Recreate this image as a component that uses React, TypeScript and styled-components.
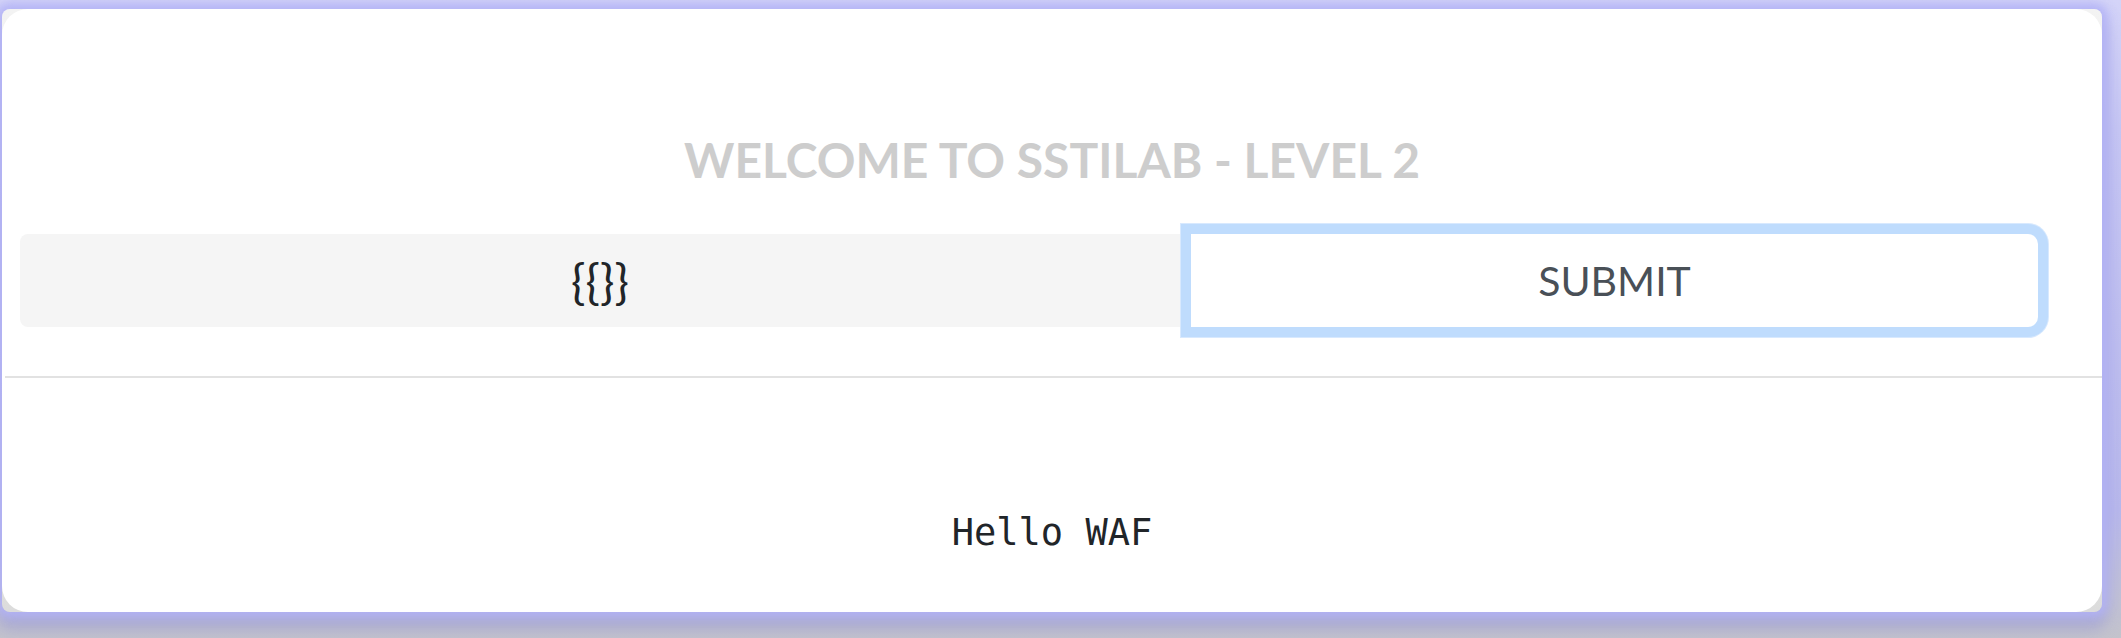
import React from "react";
import styled, { createGlobalStyle } from "styled-components";

const GlobalStyle = createGlobalStyle`
  html, body {
    margin: 0;
    padding: 0;
  }
  body {
    background: #ebebef;
    font-family: "Lato", "Liberation Sans", sans-serif;
    overflow: hidden;
  }
  * { box-sizing: border-box; }
`;

const Page = styled.div`
  height: 638px;
  padding: 9px 19px 26px 2px;
  background: linear-gradient(180deg, #d4d4f8 0%, #c6c6f4 20%, #b8b8ec 80%, #c4c4cc 100%);
`;

const Frame = styled.div`
  height: 603px;
  border-radius: 8px;
  background: linear-gradient(180deg, #f3f3f3 0%, #e8e8e8 60%, #dcdcdc 100%);
  box-shadow: 0 0 10px 6px rgba(178, 178, 246, 0.9), 0 14px 16px 4px rgba(150, 150, 210, 0.55);
`;

const Card = styled.main`
  height: 100%;
  background: #ffffff;
  border-radius: 26px;
  display: flex;
  flex-direction: column;
  align-items: stretch;
  padding-top: 126px;
`;

const Title = styled.h1`
  margin: 0;
  text-align: center;
  font-family: "Lato", "Liberation Sans", sans-serif;
  font-weight: 700;
  font-size: 48px;
  line-height: 50px;
  color: #cdcdcd;
  text-transform: uppercase;
`;

const Form = styled.form`
  display: flex;
  align-items: stretch;
  height: 93px;
  margin: 49px 64px 0 18px;
`;

const Input = styled.input`
  flex: 0 0 1160px;
  border: none;
  outline: none;
  background: #f5f5f5;
  border-radius: 8px 0 0 8px;
  text-align: center;
  font-family: "Lato", "Liberation Sans", sans-serif;
  font-size: 48px;
  color: #212529;
`;

const SubmitButton = styled.button`
  flex: 1;
  margin-left: 11px;
  border: none;
  background: #ffffff;
  border-radius: 0 10px 10px 0;
  box-shadow: 0 0 0 10px #bfdcfd, 0 0 0 11px #d8e9fe;
  font-family: "Lato", "Liberation Sans", sans-serif;
  font-size: 41px;
  color: #495057;
  text-transform: uppercase;
  cursor: pointer;
`;

const Rule = styled.hr`
  margin: 49px 0 0 3px;
  border: none;
  border-top: 2px solid #e2e2e2;
`;

const Output = styled.pre`
  margin: 133px 0 0 0;
  text-align: center;
  font-family: "DejaVu Sans Mono", "Liberation Mono", monospace;
  font-size: 37px;
  line-height: 43px;
  color: #212529;
`;

export default function App() {
  return (
    <>
      <GlobalStyle />
      <Page>
        <Frame>
          <Card>
            <Title>Welcome to SSTILab - Level 2</Title>
            <Form onSubmit={(e) => e.preventDefault()}>
              <Input type="text" defaultValue="{{}}" />
              <SubmitButton type="submit">Submit</SubmitButton>
            </Form>
            <Rule />
            <Output>Hello WAF</Output>
          </Card>
        </Frame>
      </Page>
    </>
  );
}
